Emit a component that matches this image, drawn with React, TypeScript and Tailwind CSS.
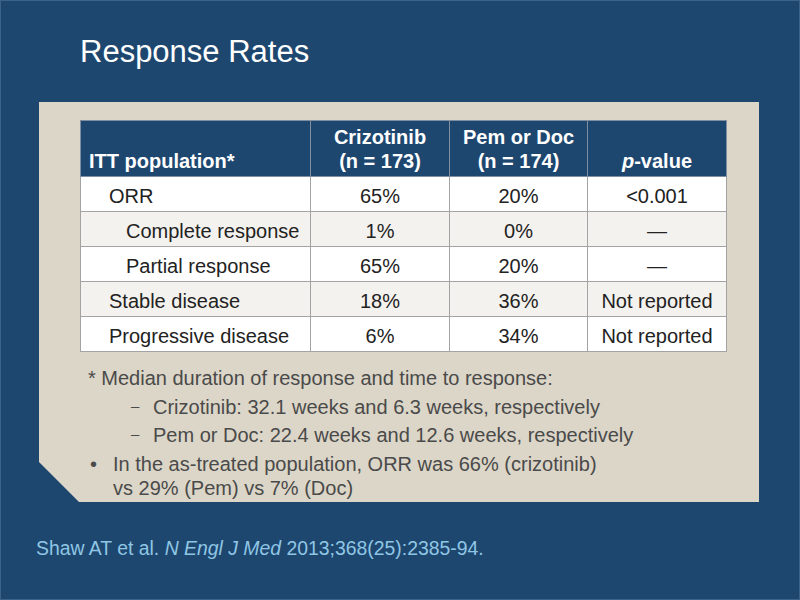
import React from 'react';

interface Row {
  label: string;
  indent: 'one' | 'two';
  criz: string;
  pem: string;
  p: string;
}

const rows: Row[] = [
  { label: 'ORR', indent: 'one', criz: '65%', pem: '20%', p: '<0.001' },
  { label: 'Complete response', indent: 'two', criz: '1%', pem: '0%', p: '—' },
  { label: 'Partial response', indent: 'two', criz: '65%', pem: '20%', p: '—' },
  { label: 'Stable disease', indent: 'one', criz: '18%', pem: '36%', p: 'Not reported' },
  { label: 'Progressive disease', indent: 'one', criz: '6%', pem: '34%', p: 'Not reported' },
];

const App: React.FC = () => {
  return (
    <div className="w-[800px] h-[600px] bg-[#1e4770] border border-[#3d6287] overflow-hidden font-['Liberation_Sans',Arial,sans-serif] flex flex-col">
      {/* Title */}
      <h1 className="mt-[33px] ml-[79px] text-[31px] leading-[36px] text-white">Response Rates</h1>

      {/* Beige panel with clipped corner */}
      <div className="mt-[32px] ml-[38px] w-[720px] h-[400px] bg-[#dcd6c8] pt-[18px] pl-[41px] [clip-path:polygon(0_0,100%_0,100%_100%,40px_100%,0_calc(100%-40px))]">
        <table className="w-[646px] border-collapse text-[20px] table-fixed">
          <colgroup>
            <col className="w-[230px]" />
            <col className="w-[139px]" />
            <col className="w-[138px]" />
            <col className="w-[139px]" />
          </colgroup>
          <thead>
            <tr className="bg-[#1e4770] text-white font-bold leading-[24px]">
              <th className="h-[56px] align-bottom text-left pl-[8px] pb-[3px] border border-[#7f8ea0]">ITT population*</th>
              <th className="h-[56px] align-bottom text-center pb-[3px] border border-[#7f8ea0]">
                Crizotinib
                <br />
                (n = 173)
              </th>
              <th className="h-[56px] align-bottom text-center pb-[3px] border border-[#7f8ea0]">
                Pem or Doc
                <br />
                (n = 174)
              </th>
              <th className="h-[56px] align-bottom text-center pb-[3px] border border-[#7f8ea0]">
                <i>p</i>-value
              </th>
            </tr>
          </thead>
          <tbody className="text-[#222]">
            {rows.map((r, i) => (
              <tr key={r.label} className={i % 2 === 0 ? 'bg-white' : 'bg-[#f4f2ee]'}>
                <td className={`h-[35px] pt-[3px] border border-[#a3a3a3] ${r.indent === 'one' ? 'pl-[28px]' : 'pl-[45px]'}`}>{r.label}</td>
                <td className="h-[35px] pt-[3px] text-center border border-[#a3a3a3]">{r.criz}</td>
                <td className="h-[35px] pt-[3px] text-center border border-[#a3a3a3]">{r.pem}</td>
                <td className="h-[35px] pt-[3px] text-center border border-[#a3a3a3]">{r.p}</td>
              </tr>
            ))}
          </tbody>
        </table>

        {/* Footnotes */}
        <div className="mt-[14px] text-[20px] leading-[24px] text-[#4a4a4a]">
          <p className="ml-[8px]">* Median duration of response and time to response:</p>
          <div className="mt-[5px] ml-[51px] flex items-center">
            <span className="w-[22px] text-[15px] -translate-y-[1px]">–</span>
            <span>Crizotinib: 32.1 weeks and 6.3 weeks, respectively</span>
          </div>
          <div className="mt-[4px] ml-[51px] flex items-center">
            <span className="w-[22px] text-[15px] -translate-y-[1px]">–</span>
            <span>Pem or Doc: 22.4 weeks and 12.6 weeks, respectively</span>
          </div>
          <div className="mt-[5px] ml-[10px] flex">
            <span className="w-[23px] shrink-0">•</span>
            <span>
              In the as-treated population, ORR was 66% (crizotinib)
              <br />
              vs 29% (Pem) vs 7% (Doc)
            </span>
          </div>
        </div>
      </div>

      {/* Citation */}
      <p className="mt-[34px] ml-[35px] text-[19.4px] leading-[24px] text-[#8fc6e4]">
        Shaw AT et al. <i>N Engl J Med</i> 2013;368(25):2385-94.
      </p>
    </div>
  );
};

export default App;
